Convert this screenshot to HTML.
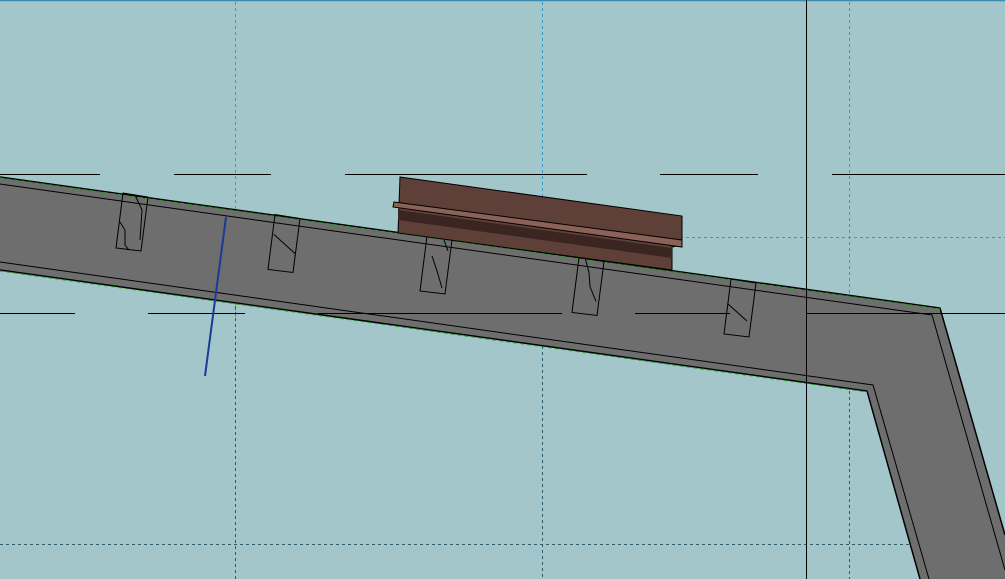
<!DOCTYPE html>
<html><head><meta charset="utf-8"><style>html,body{margin:0;padding:0;background:#a3c6cb;overflow:hidden}svg{display:block}</style></head><body>
<svg width="1005" height="579" viewBox="0 0 1005 579" xmlns="http://www.w3.org/2000/svg">
<rect width="1005" height="579" fill="#a3c6cb"/>
<line x1="0" y1="0.5" x2="1005" y2="0.5" stroke="#3a8ab0" stroke-width="1.5"/>
<g stroke="#3a9ac0" stroke-width="1" stroke-dasharray="3,3">
<line x1="235.5" y1="2" x2="235.5" y2="320"/>
<line x1="542.5" y1="2" x2="542.5" y2="350"/>
<line x1="849.5" y1="2" x2="849.5" y2="390"/>
<line x1="680" y1="237.5" x2="1005" y2="237.5"/>
</g>
<g stroke="#2d5d6c" stroke-width="1" stroke-dasharray="3,3">
<line x1="235.5" y1="300" x2="235.5" y2="579"/>
<line x1="542.5" y1="340" x2="542.5" y2="579"/>
<line x1="849.5" y1="385" x2="849.5" y2="579"/>
<line x1="0" y1="544.5" x2="915" y2="544.5"/>
</g>
<path d="M-2,177 L940,308 L1007,540 L1007,581 L920,581 L867,391 L-2,270 Z" fill="#6e6e6e"/>
<path d="M0,177 L940,308 L1005,535" fill="none" stroke="#000" stroke-width="1.5"/>
<path d="M0,270 L867,391 L920,579" fill="none" stroke="#000" stroke-width="1.5"/>
<path d="M0,184 L932,315 L1005,570" fill="none" stroke="#000" stroke-width="1"/>
<path d="M0,262 L873,385 L929,579" fill="none" stroke="#000" stroke-width="1"/>
<path d="M0,178 L940,309" stroke="#2a9a2a" stroke-width="1" stroke-dasharray="4,3" fill="none"/>
<path d="M0,271 L867,392" stroke="#2a9a2a" stroke-width="1" stroke-dasharray="4,3" fill="none"/>
<g stroke="#000" stroke-width="1">
<line x1="0" y1="174.5" x2="100" y2="174.5"/><line x1="174" y1="174.5" x2="271" y2="174.5"/><line x1="345" y1="174.5" x2="587" y2="174.5"/><line x1="660" y1="174.5" x2="758" y2="174.5"/><line x1="832" y1="174.5" x2="1005" y2="174.5"/>
<line x1="0" y1="313.5" x2="75" y2="313.5"/><line x1="148" y1="313.5" x2="245" y2="313.5"/><line x1="318" y1="313.5" x2="562" y2="313.5"/><line x1="635" y1="313.5" x2="730" y2="313.5"/><line x1="806" y1="313.5" x2="1005" y2="313.5"/>
<line x1="806.5" y1="0" x2="806.5" y2="579"/>
</g>
<g fill="none" stroke="#000" stroke-width="1">
<g><path d="M123,193 L148,197 L141,251 L116,248 Z"/><path d="M135,195 L142,210 L140,240 M120,222 L125,230 L125,245 L129,250"/></g>
<g transform="translate(152,21.5)"><path d="M123,193 L148,197 L141,251 L116,248 Z"/><path d="M122,213 L143,232"/></g>
<g transform="translate(304,43)"><path d="M123,193 L148,197 L141,251 L116,248 Z"/><path d="M140,197 L144,208 M128,213 L133,228 L138,245"/></g>
<g transform="translate(456,64.5)"><path d="M123,193 L148,197 L141,251 L116,248 Z"/><path d="M129,193 L133,208 L134,222 L140,237"/></g>
<g transform="translate(608,86)"><path d="M123,193 L148,197 L141,251 L116,248 Z"/><path d="M120,218 L139,235"/></g>
</g>
<line x1="226" y1="217" x2="205" y2="376" stroke="#1a3a9a" stroke-width="2"/>
<path d="M400,177 L682,216 L682,245 L672,247 L672,270 L398,233 Z" fill="#5f4038" stroke="#000" stroke-width="1"/>
<path d="M398,210 L672,248 L672,258 L398,220 Z" fill="#3a2520"/>
<path d="M394,202 L682,240 L682,247 L393,207 Z" fill="#8a6258" stroke="#000" stroke-width="1"/>
</svg>
</body></html>
